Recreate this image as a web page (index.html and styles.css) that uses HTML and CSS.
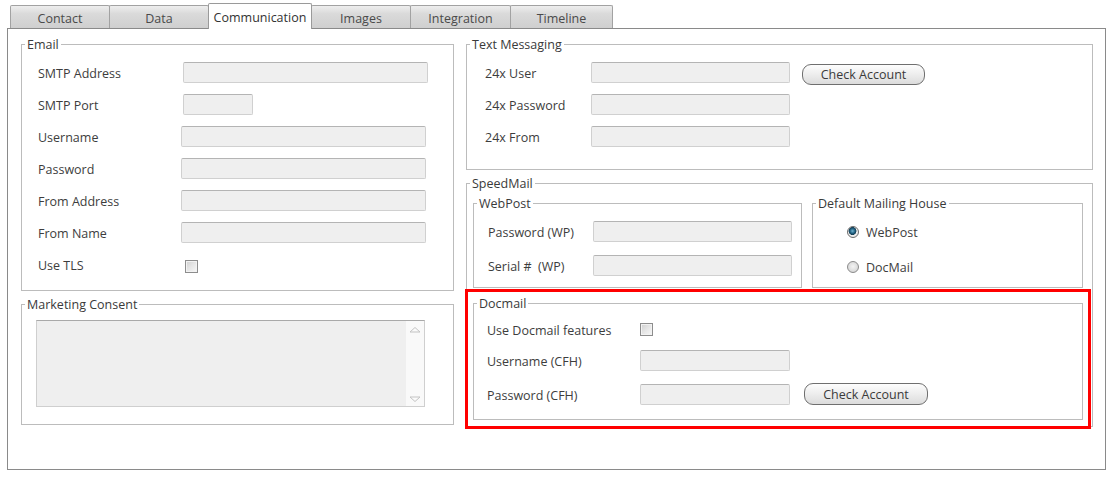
FILE: index.html
```html
<!DOCTYPE html>
<html lang="en">
<head>
<meta charset="utf-8">
<title>Communication settings</title>
<link rel="stylesheet" href="styles.css">
</head>
<body>
<div class="window">
  <div class="tabs">
    <div class="tab w100">Contact</div>
    <div class="tab w100">Data</div>
    <div class="tab active w104">Communication</div>
    <div class="tab w100">Images</div>
    <div class="tab w101">Integration</div>
    <div class="tab w103">Timeline</div>
  </div>
  <div class="panel">
    <div class="col col-left">
      <fieldset class="group email">
        <legend>Email</legend>
        <div class="rows">
          <div class="row"><span class="lbl">SMTP Address</span><span class="input shift w245"></span></div>
          <div class="row"><span class="lbl">SMTP Port</span><span class="input shift w70"></span></div>
          <div class="row"><span class="lbl">Username</span><span class="input w245"></span></div>
          <div class="row"><span class="lbl">Password</span><span class="input w245"></span></div>
          <div class="row"><span class="lbl">From Address</span><span class="input w245"></span></div>
          <div class="row"><span class="lbl">From Name</span><span class="input w245"></span></div>
          <div class="row"><span class="lbl">Use TLS</span><span class="check shift2"></span></div>
        </div>
      </fieldset>
      <fieldset class="group consent">
        <legend>Marketing Consent</legend>
        <div class="textarea">
          <div class="ta-body"></div>
          <div class="ta-scroll">
            <svg class="arrow" width="12" height="7" viewBox="0 0 12 7"><path d="M1 6 L6 1.5 L11 6 Z" fill="#fafafa" stroke="#c3c3c3" stroke-width="1" stroke-linejoin="round"/></svg>
            <svg class="arrow" width="12" height="7" viewBox="0 0 12 7"><path d="M1 1 L6 5.5 L11 1 Z" fill="#fafafa" stroke="#c3c3c3" stroke-width="1" stroke-linejoin="round"/></svg>
          </div>
        </div>
      </fieldset>
    </div>
    <div class="col col-right">
      <fieldset class="group sms">
        <legend>Text Messaging</legend>
        <div class="rows">
          <div class="row"><span class="lbl">24x User</span><span class="input w199"></span><button class="btn btn-sms" type="button">Check Account</button></div>
          <div class="row"><span class="lbl">24x Password</span><span class="input w199"></span></div>
          <div class="row"><span class="lbl">24x From</span><span class="input w199"></span></div>
        </div>
      </fieldset>
      <fieldset class="group speedmail">
        <legend>SpeedMail</legend>
        <div class="sm-top">
          <fieldset class="group webpost">
            <legend>WebPost</legend>
            <div class="rows">
              <div class="row"><span class="lbl">Password (WP)</span><span class="input w199"></span></div>
              <div class="row"><span class="lbl">Serial #&nbsp; (WP)</span><span class="input w199"></span></div>
            </div>
          </fieldset>
          <fieldset class="group house">
            <legend>Default Mailing House</legend>
            <div class="rows">
              <div class="row"><span class="radio on"></span><span class="rlbl">WebPost</span></div>
              <div class="row"><span class="radio"></span><span class="rlbl">DocMail</span></div>
            </div>
          </fieldset>
        </div>
        <div class="docwrap">
          <fieldset class="group docmail">
            <legend>Docmail</legend>
            <div class="rows">
              <div class="row"><span class="lbl">Use Docmail features</span><span class="check"></span></div>
              <div class="row"><span class="lbl">Username (CFH)</span><span class="input w150"></span></div>
              <div class="row"><span class="lbl">Password (CFH)</span><span class="input w150"></span><button class="btn btn-doc" type="button">Check Account</button></div>
            </div>
          </fieldset>
        </div>
      </fieldset>
    </div>
  </div>
</div>
</body>
</html>
```

FILE: styles.css
```css
* { box-sizing: border-box; }
html, body { margin: 0; padding: 0; background: #ffffff; }
body {
  font-family: "Open Sans", "Noto Sans", "Liberation Sans", sans-serif;
  font-size: 12.5px;
  color: #3d3d3d;
}

.window { margin-left: 7px; width: 1099px; }

/* Tabs */
.tabs {
  display: flex;
  align-items: flex-end;
  height: 28px;
  padding-left: 3px;
}
.tab {
  height: 23px;
  margin-left: -1px;
  border: 1px solid #a2a2a2;
  border-bottom: none;
  border-radius: 2px 2px 0 0;
  background: linear-gradient(to bottom, #eeeeee 0, #dadada 35%, #cfcfcf 100%);
  color: #4a4a4a;
  display: flex;
  align-items: center;
  justify-content: center;
  padding-top: 2px;
  line-height: 17px;
}
.tab:first-child { margin-left: 0; }
.tab.active {
  height: 26px;
  margin-bottom: -1px;
  background: #ffffff;
  color: #333333;
  border-color: #9a9a9a;
  position: relative;
  z-index: 1;
  padding-top: 1px;
  padding-bottom: 0;
}
.w100 { width: 100px; }
.w101 { width: 101px; }
.w103 { width: 103px; }
.w104 { width: 104px; }

/* Panel */
.panel {
  height: 442px;
  border: 1px solid #8a8a8a;
  display: flex;
  gap: 12px;
  padding: 7px 12px 0 13px;
  background: #ffffff;
}
.col { display: flex; flex-direction: column; gap: 5px; }
.col-left { width: 433px; }
.col-right { width: 627px; }

/* Groups */
.group {
  --pl: 0px;
  margin: 0;
  min-width: 0;
  border: 1px solid #bcbcbc;
  padding: 0 0 0 var(--pl);
}
.group > legend {
  margin-left: calc(3px - var(--pl));
  padding: 0 2px;
  line-height: 17px;
  color: #3a3a3a;
}
.rows { display: flex; flex-direction: column; gap: 11px; }
.row { display: flex; align-items: center; height: 21px; }
.lbl { flex: none; white-space: nowrap; margin-top: 2px; }

.input {
  display: block;
  height: 21px;
  background: #efefef;
  border: 1px solid #d0d0d0;
  border-top-color: #b4b4b4;
  border-radius: 2px;
}
.w245 { width: 245px; }
.w70 { width: 70px; }
.w199 { width: 199px; }
.w150 { width: 150px; }
.shift { margin-left: 2px; }
.shift2 { margin-left: 4px; margin-top: 3px; }

.check {
  display: block;
  width: 13px;
  height: 13px;
  border: 1px solid #8d8d8d;
  background: linear-gradient(135deg, #cfcfcf 0%, #e6e6e6 50%, #f7f7f7 100%);
  box-shadow: inset 0 0 0 1px #f2f2f2;
}

/* Email */
.email { --pl: 16px; padding-top: 9px; padding-bottom: 15px; }
.email .lbl { width: 143px; }

/* Marketing consent */
.consent { --pl: 14px; padding-top: 7px; padding-bottom: 17px; }
.textarea {
  width: 389px;
  height: 87px;
  display: flex;
  border: 1px solid #cfcfcf;
  border-top-color: #a9a9a9;
  background: #efefef;
}
.ta-body { flex: 1; }
.ta-scroll {
  width: 18px;
  background: #f9f9f9;
  display: flex;
  flex-direction: column;
  justify-content: space-between;
  align-items: center;
  padding: 5px 0 3px;
}
.arrow { display: block; }

/* Text messaging */
.sms { --pl: 18px; padding-top: 9px; padding-bottom: 22px; }
.sms .lbl { width: 106px; }
.btn {
  font: inherit;
  color: #3a3a3a;
  height: 21px;
  border: 1px solid #6f6f6f;
  border-radius: 9px;
  background: linear-gradient(to bottom, #fdfdfd 0%, #ededed 50%, #dcdcdc 100%);
  padding: 0;
  line-height: 17px;
}
.btn-sms { width: 123px; margin-left: 12px; margin-top: 4px; }
.btn-doc { width: 124px; height: 22px; margin-left: 14px; margin-top: -1px; }

/* SpeedMail */
.speedmail {
  --pl: 6px;
  padding-top: 3px;
  padding-right: 9px;
  padding-bottom: 6px;
  display: flex;
  flex-direction: column;
  gap: 7px;
}
.sm-top { display: flex; gap: 10px; }
.webpost { --pl: 14px; width: 329px; padding-top: 9px; padding-bottom: 11px; }
.webpost .rows { gap: 13px; }
.webpost .lbl { width: 105px; }
.house { --pl: 34px; width: 271px; padding-top: 9px; }
.house .rows { gap: 14px; }
.radio {
  display: block;
  width: 12px;
  height: 12px;
  border-radius: 50%;
  border: 1px solid #8b8b8b;
  background: radial-gradient(circle at 50% 45%, #f4f4f4 0, #dddddd 60%, #c6c6c6 100%);
  margin-right: 7px;
}
.radio.on {
  border-color: #6c6c6c;
  background: radial-gradient(circle at 45% 40%, #6fb3d0 0, #1f5f80 30%, #163f55 45%, #f3f3f3 52%, #d4d4d4 100%);
}
.rlbl { color: #3d3d3d; margin-top: 2px; }

/* Docmail + highlight */
.docwrap { position: relative; }
.docwrap::after {
  content: "";
  position: absolute;
  top: -6px;
  left: -8px;
  right: -8px;
  bottom: -9px;
  border: 3px solid #ff0000;
  pointer-events: none;
}
.docmail { --pl: 13px; padding-top: 7px; padding-bottom: 14px; }
.docmail .rows { gap: 10px; }
.docmail .row + .row + .row { margin-top: 3px; }
.docmail .lbl { width: 153px; }
```
